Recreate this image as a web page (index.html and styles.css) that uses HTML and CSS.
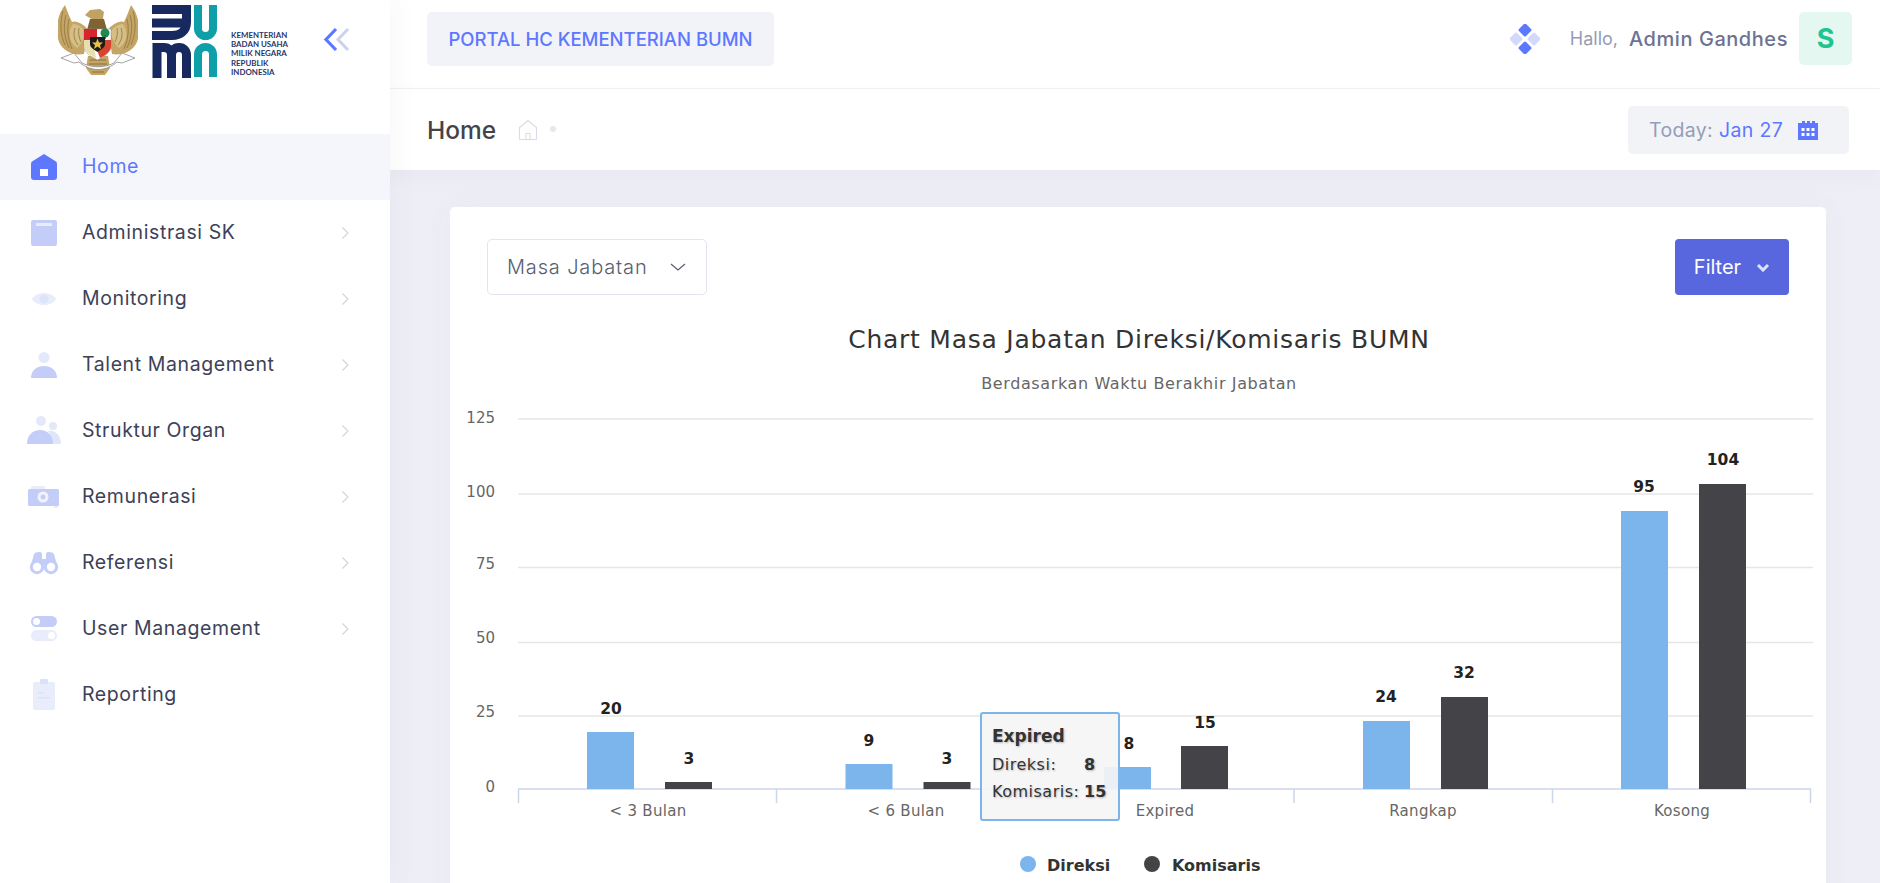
FILE: index.html
```html
<!DOCTYPE html>
<html lang="id">
<head>
<meta charset="utf-8">
<title>Portal HC Kementerian BUMN</title>
<link rel="stylesheet" href="styles.css">
</head>
<body>
<div class="app">
  <aside class="sidebar">
    <div class="brand">
      <svg class="garuda" viewBox="58 4 80 72" width="80" height="72">
        <path d="M65 5C57 15 55 30 59 42C63 51 73 56 84 54L88 30C84 24 76 20 72 22C69 16 67 10 65 5Z" fill="#c4a565"/>
        <path d="M73 24C68 31 68 42 77 48C82 44 85 37 85 31C82 27 77 24 73 24Z" fill="#d6bf87"/>
        <path d="M63 11C60 22 60 34 65 45M66 15C63 26 64 37 69 48M69 19C67 28 67 37 72 49M75 28C73 34 74 40 78 45M79 28C78 33 79 38 81 42" stroke="#8f743f" stroke-width=".8" fill="none"/>
        <path d="M131 5C139 15 141 30 137 42C133 51 123 56 112 54L108 30C112 24 120 20 124 22C127 16 129 10 131 5Z" fill="#c4a565"/>
        <path d="M123 24C128 31 128 42 119 48C114 44 111 37 111 31C114 27 119 24 123 24Z" fill="#d6bf87"/>
        <path d="M133 11C136 22 136 34 131 45M130 15C133 26 132 37 127 48M127 19C129 28 129 37 124 49M121 28C123 34 122 40 118 45M117 28C118 33 117 38 115 42" stroke="#8f743f" stroke-width=".8" fill="none"/>
        <path d="M85 15L90 10L100 9L104 12L103 18L106 30H88L92 19L88 17Z" fill="#c2a263"/>
        <path d="M90 19H104L107 30H87Z" fill="#7f6334"/>
        <path d="M88 56H108L110 68L105 75H91L86 68Z" fill="#c4a565"/>
        <path d="M90 60H106M89 64H107M90 68H106M92 72H104" stroke="#7f6334" stroke-width=".8" fill="none"/>
        <path d="M84 29H111V46C111 53 103 57 97.500 60C92 57 84 53 84 46Z" fill="#fff" stroke="#8c8c8c" stroke-width=".5"/>
        <path d="M84 29H97V40H84Z" fill="#d8262f"/>
        <path d="M97 40H111V46C111 52 104 56 100 58L97 50Z" fill="#d8452c"/>
        <path d="M84 40H93L96 58C90 55 84 51 84 46Z" fill="#e7dfb0"/>
        <circle cx="105" cy="33" r="4.500" fill="#1f8a4c"/>
        <rect x="104.500" y="35" width="1.300" height="4" fill="#6b4a20"/>
        <path d="M90 37H105V44C105 48 100 50 97.500 52C95 50 90 48 90 44Z" fill="#1c1c1c"/>
        <path d="M97.500 38.500L99 42.500H103L100 45L101 49L97.500 46.500L94 49L95 45L92 42.500H96Z" fill="#e8c24a"/>
        <path d="M61 58L74 53L82 63C92 68 104 68 114 63L122 53L135 58L122 63L117 62C105 72 91 72 79 62L74 63Z" fill="#fff" stroke="#8c8c8c" stroke-width=".8"/>
      </svg>
      <svg class="bumn" viewBox="151 3 67 74" width="67" height="74">
        <g fill="none" stroke="#17295e" stroke-width="9">
          <path d="M152 8.500H186.500V21C186.500 30 180 34.500 172 34.500H152"/>
          <path d="M152 22H186.500"/>
          <path d="M157 77V46.500H164C168.500 46.500 171.500 49.500 171.500 54V77M171.500 54C171.500 49.500 174.500 46.500 179 46.500C183.500 46.500 186.500 49.500 186.500 54V77"/>
        </g>
        <g fill="none" stroke="#0f9fa8" stroke-width="8">
          <path d="M198 4V27.500A7.500 7.500 0 0 0 213 27.500V4"/>
          <path d="M198 76V53.500A7.500 7.500 0 0 1 213 53.500V76"/>
        </g>
      </svg>
      <div class="ministry">KEMENTERIAN<br>BADAN USAHA<br>MILIK NEGARA<br>REPUBLIK<br>INDONESIA</div>
      <svg class="collapse" viewBox="0 0 27 25" width="27" height="25">
        <path d="M13 2L3 12.500L13 23" fill="none" stroke="#5d78ff" stroke-width="3.200"/>
        <path d="M25 2L15 12.500L25 23" fill="none" stroke="#ccd2ec" stroke-width="3"/>
      </svg>
    </div>
    <nav class="menu">
      <a class="item active">
        <svg class="ico" viewBox="0 0 32 32"><path d="M16 3L28 10.500Q29 11 29 13V26Q29 29 26 29H6Q3 29 3 26V13Q3 11 4 10.500Z" fill="#5d78ff"/><rect x="12" y="18" width="8" height="7" fill="#fff"/></svg>
        <span class="label">Home</span>
      </a>
      <a class="item">
        <svg class="ico" viewBox="0 0 32 32"><rect x="3" y="3" width="26" height="26" rx="2" fill="#c3cdf8"/><rect x="8" y="6" width="16" height="3" fill="#e8ecfc"/></svg>
        <span class="label">Administrasi SK</span>
        <svg class="chev" viewBox="0 0 9 14"><path d="M1.500 1.500L7 7L1.500 12.500" fill="none" stroke="#d2d5df" stroke-width="1.200"/></svg>
      </a>
      <a class="item">
        <svg class="ico" viewBox="0 0 32 32"><path d="M4 16C9 8 23 8 28 16C23 24 9 24 4 16Z" fill="#e9edfb"/><circle cx="16" cy="16" r="4.500" fill="#dde3f9"/></svg>
        <span class="label">Monitoring</span>
        <svg class="chev" viewBox="0 0 9 14"><path d="M1.500 1.500L7 7L1.500 12.500" fill="none" stroke="#d2d5df" stroke-width="1.200"/></svg>
      </a>
      <a class="item">
        <svg class="ico" viewBox="0 0 32 32"><circle cx="16" cy="8.500" r="5.500" fill="#e3e8fa"/><path d="M3 29C3 21 9 17 16 17C23 17 29 21 29 29Z" fill="#c3cdf8"/></svg>
        <span class="label">Talent Management</span>
        <svg class="chev" viewBox="0 0 9 14"><path d="M1.500 1.500L7 7L1.500 12.500" fill="none" stroke="#d2d5df" stroke-width="1.200"/></svg>
      </a>
      <a class="item">
        <svg class="ico" viewBox="0 0 32 32"><circle cx="13" cy="6" r="5" fill="#e3e8fa"/><circle cx="25" cy="11" r="4" fill="#e3e8fa"/><path d="M24 29C24 22 21 17 20 16C27 14 33 21 33 29Z" fill="#dfe5fa"/><path d="M-1 29C-1 20 5 15 12 15C19 15 25 20 25 29Z" fill="#c3cdf8"/></svg>
        <span class="label">Struktur Organ</span>
        <svg class="chev" viewBox="0 0 9 14"><path d="M1.500 1.500L7 7L1.500 12.500" fill="none" stroke="#d2d5df" stroke-width="1.200"/></svg>
      </a>
      <a class="item">
        <svg class="ico" viewBox="0 0 32 32"><rect x="3" y="5" width="14" height="6" rx="1" fill="#e9edfb"/><rect x="0" y="8" width="31" height="17" rx="1.500" fill="#c3cdf8"/><path d="M26 25H30V27H26Z" fill="#e9edfb"/><circle cx="15" cy="16" r="5.500" fill="#f1f3fd"/><circle cx="15" cy="16" r="2.500" fill="#c3cdf8"/></svg>
        <span class="label">Remunerasi</span>
        <svg class="chev" viewBox="0 0 9 14"><path d="M1.500 1.500L7 7L1.500 12.500" fill="none" stroke="#d2d5df" stroke-width="1.200"/></svg>
      </a>
      <a class="item">
        <svg class="ico" viewBox="0 0 32 32"><path d="M6 7Q7 5 12 5Q14 5 14 8V12H18V8Q18 5 20 5Q25 5 26 7L29 18H3Z" fill="#c3cdf8"/><circle cx="9" cy="20" r="5.700" fill="#fff" stroke="#c3cdf8" stroke-width="3"/><circle cx="23" cy="20" r="5.700" fill="#fff" stroke="#c3cdf8" stroke-width="3"/></svg>
        <span class="label">Referensi</span>
        <svg class="chev" viewBox="0 0 9 14"><path d="M1.500 1.500L7 7L1.500 12.500" fill="none" stroke="#d2d5df" stroke-width="1.200"/></svg>
      </a>
      <a class="item">
        <svg class="ico" viewBox="0 0 32 32"><rect x="3" y="3" width="26" height="11" rx="5.500" fill="#c3cdf8"/><circle cx="8.500" cy="8.500" r="3.500" fill="#fff"/><rect x="3" y="17" width="26" height="11" rx="5.500" fill="#e9edfb"/><circle cx="23.500" cy="22.500" r="3.500" fill="#fff"/></svg>
        <span class="label">User Management</span>
        <svg class="chev" viewBox="0 0 9 14"><path d="M1.500 1.500L7 7L1.500 12.500" fill="none" stroke="#d2d5df" stroke-width="1.200"/></svg>
      </a>
      <a class="item">
        <svg class="ico" viewBox="0 0 32 32"><rect x="5" y="3" width="22" height="28" rx="2" fill="#e9edfb"/><rect x="12" y="0" width="8" height="5" rx="1" fill="#dbe1f8"/><rect x="10" y="13" width="6" height="1.500" fill="#dbe1f8"/><rect x="10" y="18" width="12" height="1.500" fill="#dbe1f8"/></svg>
        <span class="label">Reporting</span>
      </a>
    </nav>
  </aside>
  <main class="main">
    <header class="topbar">
      <div class="portal">PORTAL HC KEMENTERIAN BUMN</div>
      <div class="user">
        <svg class="diamonds" viewBox="0 0 30 30" width="30" height="30">
          <rect x="10" y="1" width="10" height="10" rx="1.500" transform="rotate(45 15 6)" fill="#5d78ff"/>
          <rect x="10" y="19" width="10" height="10" rx="1.500" transform="rotate(45 15 24)" fill="#5d78ff"/>
          <rect x="1" y="10" width="10" height="10" rx="1.500" transform="rotate(45 6 15)" fill="#d3d9fb"/>
          <rect x="19" y="10" width="10" height="10" rx="1.500" transform="rotate(45 24 15)" fill="#d3d9fb"/>
        </svg>
        <span class="hallo">Hallo,</span>
        <span class="name">Admin Gandhes</span>
        <span class="avatar">S</span>
      </div>
    </header>
    <section class="subbar">
      <div class="crumbs">
        <h1 class="page-title">Home</h1>
        <svg class="home-line" viewBox="0 0 20 22" width="20" height="22"><path d="M1.500 8.500L10 1.500L18.500 8.500V19.500Q18.500 20.500 17.500 20.500H2.500Q1.500 20.500 1.500 19.500ZM8 20.500V14.500H12V20.500" fill="none" stroke="#d9dbe8" stroke-width="1.100"/></svg>
        <span class="dot"></span>
      </div>
      <div class="today">
        <span class="today-k">Today:</span>
        <span class="today-v">Jan 27</span>
        <svg class="cal" viewBox="0 0 20 20" width="20" height="20"><path d="M0 3H4V1H7V3H9V1H12V3H14V1H17V3H20V20H0Z" fill="#5d78ff"/><g fill="#fff"><rect x="3.500" y="8" width="3" height="3"/><rect x="8.500" y="8" width="3" height="3"/><rect x="13.500" y="8" width="3" height="3"/><rect x="3.500" y="13" width="3" height="3"/><rect x="8.500" y="13" width="3" height="3"/><rect x="13.500" y="13" width="3" height="3"/></g></svg>
      </div>
    </section>
    <section class="content">
      <div class="card">
        <div class="toolbar">
          <div class="select">
            <span>Masa Jabatan</span>
            <svg viewBox="0 0 16 8" width="16" height="8"><path d="M1 1L8 7L15 1" fill="none" stroke="#595d6e" stroke-width="1.200"/></svg>
          </div>
          <div class="filter">
            <span>Filter</span>
            <svg viewBox="0 0 14 9" width="14" height="9"><path d="M2 2L7 7L12 2" fill="none" stroke="#dfe3ff" stroke-width="3"/></svg>
          </div>
        </div>
        <svg class="chart" viewBox="450 300 1376 583" width="1376" height="583">
          <text class="c-title" x="1139" y="348">Chart Masa Jabatan Direksi/Komisaris BUMN</text>
          <text class="c-sub" x="1139" y="389">Berdasarkan Waktu Berakhir Jabatan</text>
          <g class="grid">
            <path d="M518 419H1813M518 494H1813M518 567.500H1813M518 642.500H1813M518 716H1813"/>
          </g>
          <g class="ylab">
            <text x="495" y="423">125</text>
            <text x="495" y="497">100</text>
            <text x="495" y="569">75</text>
            <text x="495" y="643">50</text>
            <text x="495" y="717">25</text>
            <text x="495" y="792">0</text>
          </g>
          <path class="axis" d="M518 789H1811M518.500 789V803M776.500 789V803M1035 789V803M1294 789V803M1552.500 789V803M1810.500 789V803"/>
          <g class="xlab">
            <text x="648" y="816">&lt; 3 Bulan</text>
            <text x="906" y="816">&lt; 6 Bulan</text>
            <text x="1165" y="816">Expired</text>
            <text x="1423" y="816">Rangkap</text>
            <text x="1682" y="816">Kosong</text>
          </g>
          <g class="b1">
            <rect x="587" y="732" width="47" height="57"/>
            <rect x="845.500" y="764" width="47" height="25"/>
            <rect x="1104" y="767" width="47" height="22"/>
            <rect x="1363" y="721" width="47" height="68"/>
            <rect x="1621" y="511" width="47" height="278"/>
          </g>
          <g class="b2">
            <rect x="665" y="782" width="47" height="7"/>
            <rect x="923.500" y="782" width="47" height="7"/>
            <rect x="1181" y="746" width="47" height="43"/>
            <rect x="1441" y="697" width="47" height="92"/>
            <rect x="1699" y="484" width="47" height="305"/>
          </g>
          <g class="val">
            <text x="611" y="714">20</text>
            <text x="689" y="764">3</text>
            <text x="869" y="746">9</text>
            <text x="947" y="764">3</text>
            <text x="1129" y="749">8</text>
            <text x="1205" y="728">15</text>
            <text x="1386" y="702">24</text>
            <text x="1464" y="678">32</text>
            <text x="1644" y="492">95</text>
            <text x="1723" y="465">104</text>
          </g>
          <circle cx="1028" cy="864" r="8" fill="#7cb5ec"/>
          <text class="leg" x="1047" y="871">Direksi</text>
          <circle cx="1152" cy="864" r="8" fill="#434348"/>
          <text class="leg" x="1172" y="871">Komisaris</text>
        </svg>
        <div class="tooltip">
          <div class="tip-head">Expired</div>
          <div class="tip-row"><span>Direksi:</span><b>8</b></div>
          <div class="tip-row"><span>Komisaris:</span><b>15</b></div>
        </div>
      </div>
    </section>
  </main>
</div>
</body>
</html>
```
FILE: styles.css
```css
* { box-sizing: border-box; }
html, body { margin: 0; height: 883px; overflow: hidden; }
body { font-family: Inter, "Noto Sans", sans-serif; background: #eeeff6; color: #3f4254; }
.app { display: flex; height: 883px; }

.sidebar { width: 390px; flex: none; background: #fff; position: relative; z-index: 2; box-shadow: 0 0 28px rgba(82, 63, 105, .06); }
.brand { height: 134px; display: flex; align-items: flex-start; padding: 4px 0 0 58px; }
.garuda { flex: none; }
.bumn { flex: none; margin-left: 13px; }
.ministry { font-family: Lato, sans-serif; font-weight: 700; font-size: 7.900px; line-height: 9.400px; color: #2b3668; margin: 26.500px 0 0 13px; white-space: nowrap; }
.collapse { margin: 23px 0 0 35px; flex: none; }

.menu { display: flex; flex-direction: column; }
.item { height: 66px; display: flex; align-items: center; padding-left: 28px; font-size: 19.500px; color: #3d4158; letter-spacing: .6px; }
.item.active { background: #f4f6fb; color: #5d78ff; }
.ico { width: 32px; height: 32px; flex: none; overflow: visible; }
.label { margin-left: 22px; flex: 1; padding-bottom: 2px; }
.chev { width: 9px; height: 14px; flex: none; margin-right: 40px; }

.main { flex: 1; min-width: 0; display: flex; flex-direction: column; }
.topbar { height: 89px; flex: none; background: #fff; border-bottom: 1px solid #f0f0f5; display: flex; align-items: center; justify-content: space-between; padding: 0 28px 11px 37px; }
.portal { height: 54px; width: 347px; background: #f2f3f8; border-radius: 5px; display: flex; align-items: center; justify-content: center; color: #5d78ff; font-size: 18.500px; font-weight: 500; white-space: nowrap; }
.user { display: flex; align-items: center; }
.diamonds { margin-right: 30px; }
.hallo { color: #959cb6; font-size: 18px; margin-right: 11px; }
.name { color: #6c7293; font-size: 20px; font-weight: 500; letter-spacing: .55px; margin-right: 11px; }
.avatar { width: 53px; height: 53px; border-radius: 5px; background: #e5f7f1; color: #1dc58f; font-size: 27px; font-weight: 700; display: flex; align-items: center; justify-content: center; }

.subbar { height: 81px; flex: none; background: #fff; display: flex; align-items: center; justify-content: space-between; padding: 0 31px 0 37px; box-shadow: 0 8px 18px rgba(82, 63, 105, .045); position: relative; }
.crumbs { display: flex; align-items: center; }
.page-title { margin: 0; font-size: 24.500px; font-weight: 500; color: #434349; width: 91px; }
.home-line { margin-right: 12px; }
.dot { width: 6px; height: 6px; border-radius: 50%; background: #e7e8ef; margin-bottom: 2px; }
.today { width: 221px; height: 48px; background: #f2f3f7; border-radius: 5px; display: flex; align-items: center; padding-left: 21px; font-size: 19.500px; letter-spacing: .35px; }
.today-k { color: #959cb6; margin-right: 6px; }
.today-v { color: #5d78ff; margin-right: 15px; }

.content { flex: 1; padding: 37px 54px 0 60px; }
.card { background: #fff; border-radius: 5px; position: relative; height: 760px; box-shadow: 0 0 30px rgba(82, 63, 105, .04); }
.toolbar { height: 93px; display: flex; justify-content: space-between; align-items: flex-start; padding: 32px 37px 0 37px; }
.select { width: 220px; height: 56px; border: 1px solid #e2e5ec; border-radius: 5px; display: flex; align-items: center; justify-content: space-between; padding: 0 20px 0 19px; font-size: 20px; font-weight: 300; letter-spacing: .85px; color: #595d6e; }
.filter { width: 114px; height: 56px; background: #5867dd; border-radius: 4px; color: #fff; font-size: 20px; display: flex; align-items: center; justify-content: center; gap: 15px; }

.chart { display: block; }
.chart text { font-family: "DejaVu Sans", sans-serif; }
.c-title { font-size: 25px; fill: #333; text-anchor: middle; letter-spacing: .75px; }
.c-sub { font-size: 16px; fill: #666; text-anchor: middle; letter-spacing: .62px; }
.grid path { stroke: #e6e6e6; stroke-width: 1.500; fill: none; }
.axis { stroke: #ccd6eb; stroke-width: 1.500; fill: none; }
.ylab text { font-size: 15px; fill: #666; text-anchor: end; }
.xlab text { font-size: 15px; fill: #666; text-anchor: middle; letter-spacing: .3px; }
.b1 rect { fill: #7cb5ec; }
.b2 rect { fill: #434348; }
.val text { font-size: 15.500px; font-weight: 700; fill: #222; text-anchor: middle; }
.leg { font-size: 16px; font-weight: 700; fill: #333; }

.tooltip { position: absolute; left: 530px; top: 505px; width: 140px; height: 109px; background: rgba(245, 245, 245, .92); border: 2px solid #7cb5ec; border-radius: 3px; padding: 12px 0 0 10px; font-family: "DejaVu Sans", sans-serif; color: #333; text-shadow: 1px 1px 2px rgba(0, 0, 0, .25); }
.tip-head { font-size: 17px; font-weight: 700; margin-bottom: 5px; }
.tip-row { display: grid; grid-template-columns: 92px auto; font-size: 16px; letter-spacing: .5px; line-height: 27px; white-space: nowrap; }
.tip-row b { font-size: 16px; letter-spacing: 0; }
```
